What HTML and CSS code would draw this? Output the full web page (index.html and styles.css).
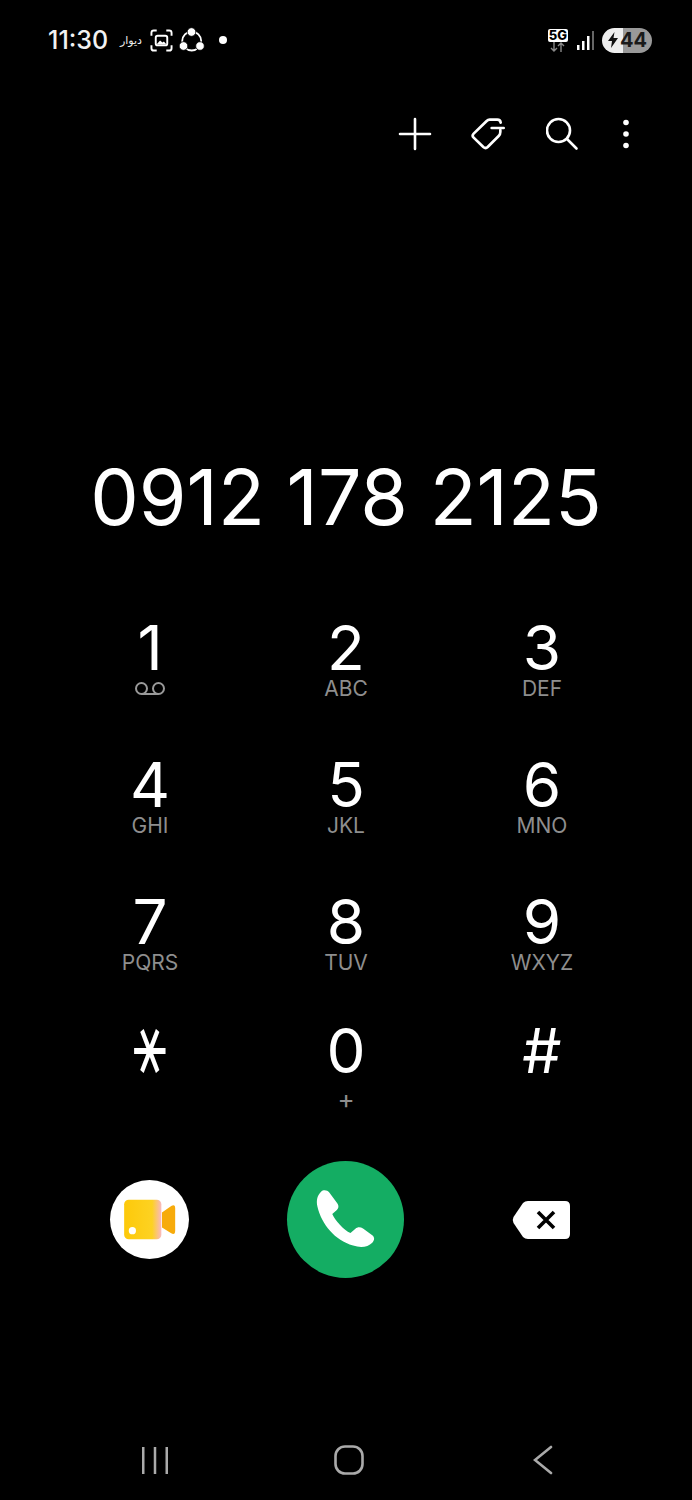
FILE: index.html
```html
<!DOCTYPE html>
<html lang="fa">
<head>
  <meta charset="UTF-8" />
  <title>Phone</title>
  <link rel="stylesheet" href="styles.css">
</head>
<body>

<div class="status">
  <div class="status-left">
    <span class="clock">11:30</span>
    <span class="app-name">دیوار</span>
    <svg class="icon-shot" viewBox="0 0 24 24" fill="none" stroke="#fff" stroke-width="2">
      <path d="M1.500 7V4q0-2.500 2.500-2.500h3M17 1.500h3q2.500 0 2.500 2.500v3M22.500 17v3q0 2.500-2.500 2.500h-3M7 22.500H4q-2.500 0-2.500-2.500v-3"/>
      <rect x="6" y="7" width="12" height="10" rx="2"/>
      <path d="M7 16l3.500-4 2.500 2 1.500-1 2.500 3z" fill="#fff" stroke="none"/>
    </svg>
    <svg class="icon-share" viewBox="0 0 26 26" fill="none" stroke="#fff" stroke-width="1.800">
      <circle cx="12.700" cy="14" r="9.500"/>
      <circle cx="12.500" cy="5" r="4.300" fill="#fff" stroke="#000" stroke-width="0.800"/>
      <circle cx="4.500" cy="19" r="4.300" fill="#fff" stroke="#000" stroke-width="0.800"/>
      <circle cx="21" cy="19" r="4.300" fill="#fff" stroke="#000" stroke-width="0.800"/>
    </svg>
    <span class="dot"></span>
  </div>
  <div class="status-right">
    <div class="net">
      <span class="net-label">5G</span>
      <svg class="net-arrows" viewBox="0 0 20 10" fill="none" stroke="#888" stroke-width="1.400">
        <path d="M6 0v9M3 6l3 3 3-3M13 10V1M10 4l3-3 3 3"/>
      </svg>
    </div>
    <svg class="signal" viewBox="0 0 17 19">
      <rect x="0" y="14" width="2.500" height="5" fill="#fff"/>
      <rect x="5" y="10" width="2.500" height="9" fill="#fff"/>
      <rect x="10" y="5" width="2.500" height="14" fill="#fff"/>
      <rect x="15" y="0" width="2" height="19" fill="#666"/>
    </svg>
    <div class="battery">
      <svg class="bolt" viewBox="0 0 10 16"><path d="M6.500 0L0 9h4l-1 7 7-10H5.500z" fill="#111"/></svg>
      <span class="battery-num">44</span>
    </div>
  </div>
</div>

<div class="actions">
  <svg class="act act-plus" viewBox="0 0 34 34" fill="none" stroke="#fff" stroke-width="2.600" stroke-linecap="round">
    <path d="M17 2v30M2 17h30"/>
  </svg>
  <svg class="act act-tag" viewBox="256 40 108 96" fill="none" stroke="#fff" stroke-width="8" stroke-linecap="round">
    <path d="M345 54Q344 45 335 45L312 45Q307 45 303 49L264 87Q258 93 264 99L293 127Q300 133 306 127L339 94Q344 89 344 82L344 76"/>
    <path d="M318 70L354 70"/>
  </svg>
  <svg class="act act-search" viewBox="1 0 34 34" fill="none" stroke="#fff" stroke-width="2.600" stroke-linecap="round">
    <circle cx="13.500" cy="13.500" r="11.500"/>
    <path d="M22 22L31.500 31.500"/>
  </svg>
  <svg class="act act-more" viewBox="0 0 14 30" fill="#fff">
    <circle cx="7" cy="3.500" r="2.800"/>
    <circle cx="7" cy="15" r="2.800"/>
    <circle cx="7" cy="26.500" r="2.800"/>
  </svg>
</div>

<div class="number">0912 178 2125</div>

<div class="keypad">
  <div class="key">
    <span class="digit">1</span>
    <svg class="voicemail" viewBox="0 0 32 15" fill="none" stroke="#999" stroke-width="2">
      <circle cx="7.500" cy="7.500" r="5.500"/>
      <circle cx="24.500" cy="7.500" r="5.500"/>
      <path d="M7.500 13h17"/>
    </svg>
  </div>
  <div class="key"><span class="digit">2</span><span class="sub">ABC</span></div>
  <div class="key"><span class="digit">3</span><span class="sub">DEF</span></div>
  <div class="key"><span class="digit">4</span><span class="sub">GHI</span></div>
  <div class="key"><span class="digit">5</span><span class="sub">JKL</span></div>
  <div class="key"><span class="digit">6</span><span class="sub">MNO</span></div>
  <div class="key"><span class="digit">7</span><span class="sub">PQRS</span></div>
  <div class="key"><span class="digit">8</span><span class="sub">TUV</span></div>
  <div class="key"><span class="digit">9</span><span class="sub">WXYZ</span></div>
  <div class="key key-last"><span class="digit star">⚹</span></div>
  <div class="key key-last"><span class="digit">0</span><span class="sub plus">+</span></div>
  <div class="key key-last"><span class="digit">#</span></div>
</div>

<div class="calls">
  <div class="video-btn">
    <svg viewBox="60 88 240 240" width="79" height="79">
      <defs>
        <linearGradient id="camBody" x1="0" x2="1" y1="0" y2="0">
          <stop offset="0" stop-color="#fdc90a"/>
          <stop offset="0.75" stop-color="#fdd222"/>
          <stop offset="1" stop-color="#f9b9c0"/>
        </linearGradient>
      </defs>
      <rect x="103" y="148" width="113" height="120" rx="14" fill="url(#camBody)"/>
      <path d="M218 187L246 167Q258 160 258 174V242Q258 256 246 250L218 232z" fill="#f7ab0b"/>
      <circle cx="128" cy="242" r="11" fill="#fff"/>
    </svg>
  </div>
  <div class="call-btn">
    <svg viewBox="590 32 354 354" width="117" height="117">
      <path fill="#fff" d="M693 125C700 118 712 120 718 127L742 160C748 168 746 176 740 181L727 192C735 212 762 240 782 250L797 237C803 231 812 231 820 236L848 257C856 263 855 273 848 279C835 292 815 296 790 288C735 272 695 225 682 170C678 150 682 136 693 125Z"/>
    </svg>
  </div>
  <svg class="backspace" viewBox="0 0 58 38">
    <path fill="#fff" d="M16 0H53Q58 0 58 5V33Q58 38 53 38H16Q13 38 11 36L1.500 22Q0 19 1.500 16L11 2Q13 0 16 0Z"/>
    <path d="M26 11L42 27M42 11L26 27" stroke="#000" stroke-width="3.600" fill="none"/>
  </svg>
</div>

<div class="navbar">
  <svg class="nav-recent" viewBox="0 0 28 28" fill="#aaa">
    <rect x="1" y="1" width="2.500" height="27"/>
    <rect x="12.750" y="1" width="2.500" height="27"/>
    <rect x="24.500" y="1" width="2.500" height="27"/>
  </svg>
  <svg class="nav-home" viewBox="0 0 30 30" fill="none" stroke="#aaa" stroke-width="2.600">
    <rect x="1.500" y="1.500" width="27" height="27" rx="9.500"/>
  </svg>
  <svg class="nav-back" viewBox="0 0 20 30" fill="none" stroke="#aaa" stroke-width="2.600" stroke-linecap="round">
    <path d="M18 2L2 15L18 28"/>
  </svg>
</div>

</body>
</html>
```

FILE: styles.css
```css
* {
  box-sizing: border-box;
}
body {
  margin: 0;
  width: 692px;
  height: 1500px;
  overflow: hidden;
  background: #000;
  color: #fff;
  font-family: Inter, Roboto, "Liberation Sans", sans-serif;
  direction: ltr;
}
svg {
  display: block;
}

/* status bar */
.status {
  height: 80px;
  padding: 0 40px 0 48px;
  display: flex;
  align-items: center;
  justify-content: space-between;
}
.status-left {
  display: flex;
  align-items: center;
}
.clock {
  width: 60px;
  font-size: 25px;
  font-weight: 500;
  white-space: nowrap;
  color: #f2f2f2;
}
.app-name {
  margin-left: 12px;
  width: 24px;
  font-family: "DejaVu Sans", sans-serif;
  font-size: 11px;
  color: #eee;
}
.icon-shot {
  width: 23px;
  height: 23px;
  margin-left: 6px;
}
.icon-share {
  width: 26px;
  height: 26px;
  margin-left: 6px;
}
.dot {
  width: 8px;
  height: 8px;
  margin-left: 14px;
  border-radius: 50%;
  background: #fff;
}
.status-right {
  display: flex;
  align-items: center;
}
.net {
  width: 20px;
  display: flex;
  flex-direction: column;
}
.net-label {
  height: 13px;
  border-radius: 2px;
  background: #fff;
  color: #000;
  font-size: 13px;
  font-weight: 800;
  line-height: 13px;
  text-align: center;
}
.net-arrows {
  width: 20px;
  height: 10px;
}
.signal {
  width: 17px;
  height: 19px;
  margin-left: 9px;
}
.battery {
  width: 50px;
  height: 25px;
  margin-left: 8px;
  padding-left: 6px;
  display: flex;
  align-items: center;
  border-radius: 13px;
  background: linear-gradient(90deg, #eee 0, #eee 21px, #999 21px);
}
.bolt {
  width: 10px;
  height: 16px;
}
.battery-num {
  margin-left: 2px;
  font-size: 20px;
  font-weight: 700;
  color: #1a1a1a;
}

/* action bar */
.actions {
  height: 108px;
  padding-right: 59px;
  display: flex;
  align-items: center;
  justify-content: flex-end;
  gap: 39px;
}
.act-plus,
.act-search {
  width: 34px;
  height: 34px;
}
.act-tag {
  width: 36px;
  height: 32px;
}
.act-more {
  width: 14px;
  height: 30px;
}

/* dialled number */
.number {
  margin-top: 259px;
  height: 100px;
  font-size: 77px;
  font-weight: 400;
  line-height: 100px;
  text-align: center;
}

/* keypad */
.keypad {
  margin-top: 72px;
  padding: 0 52px;
  display: grid;
  grid-template-columns: repeat(3, 196px);
}
.key {
  height: 137px;
  display: flex;
  flex-direction: column;
  align-items: center;
}
.key-last {
  margin-top: -8px;
}
.digit {
  height: 58px;
  font-size: 62px;
  line-height: 58px;
}
.star {
  font-family: "DejaVu Sans", sans-serif;
  font-size: 56px;
  transform: translateY(-8px) scaleY(1.5);
}
.sub {
  font-size: 21px;
  line-height: 24px;
  color: #8e8e8e;
}
.plus {
  margin-top: 7px;
  font-size: 26px;
}
.voicemail {
  width: 32px;
  height: 15px;
  margin-top: 4px;
}

/* call row */
.calls {
  padding: 0 52px 0 51px;
  margin-top: 2px;
  display: grid;
  grid-template-columns: repeat(3, 196px);
  justify-items: center;
  align-items: center;
  height: 117px;
}
.video-btn {
  width: 79px;
  height: 79px;
  margin-left: 1px;
  border-radius: 50%;
  background: #fff;
}
.call-btn {
  width: 117px;
  height: 117px;
  border-radius: 50%;
  background: #14ad63;
}
.backspace {
  width: 58px;
  height: 38px;
}

/* bottom nav */
.navbar {
  margin-top: 167px;
  padding-left: 58px;
  display: grid;
  grid-template-columns: repeat(3, 194px);
  justify-items: center;
  align-items: center;
  height: 30px;
}
.nav-recent {
  width: 28px;
  height: 28px;
}
.nav-home {
  width: 30px;
  height: 30px;
}
.nav-back {
  width: 20px;
  height: 30px;
}
```
